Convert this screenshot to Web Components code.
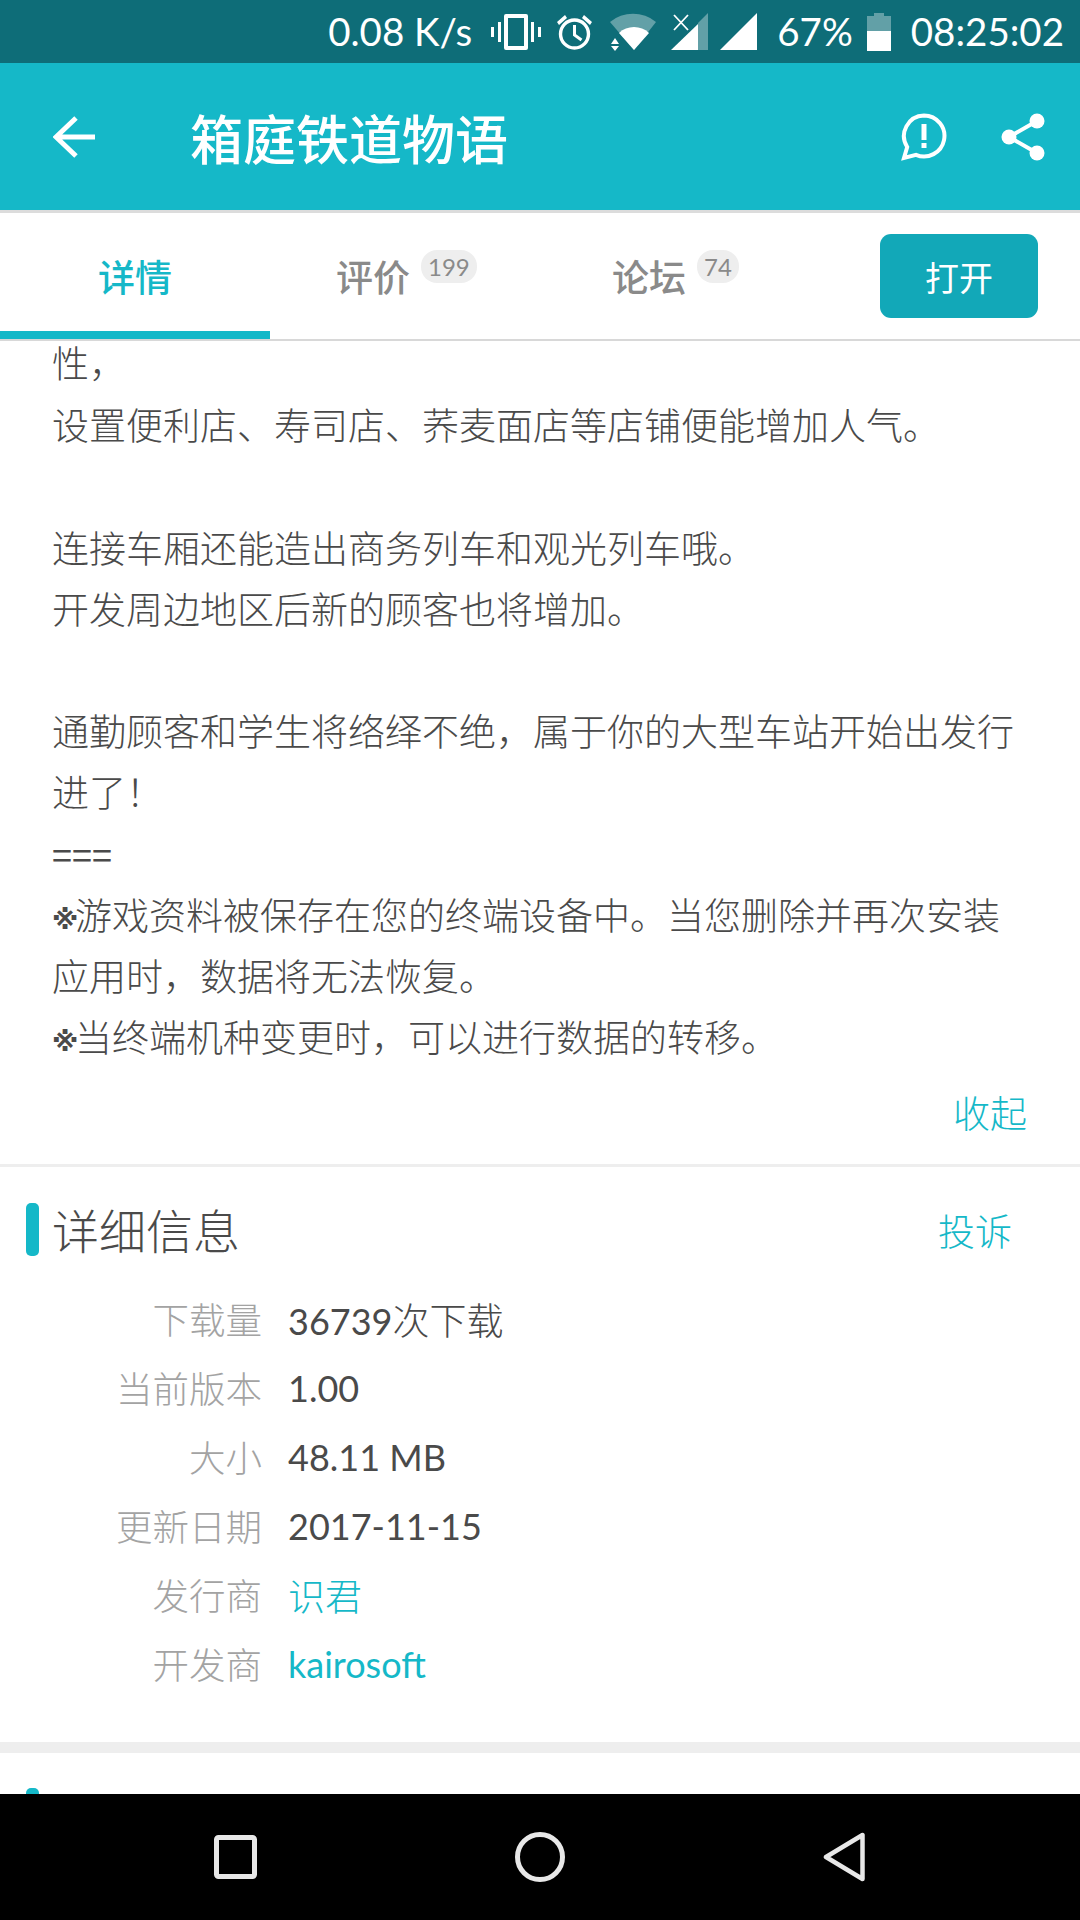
<!DOCTYPE html>
<html lang="zh">
<head>
<meta charset="utf-8">
<title>箱庭铁道物语</title>
<style>
    html, body{
        margin: 0;
        padding: 0;
        background: #fff;
    }
    body{
        width: 1080px;
        height: 1920px;
        overflow: hidden;
        font-family: Lato, "Noto Sans CJK SC", "Noto Sans", sans-serif;
        font-weight: 300;
    }
    app-page{
        display: flex;
    }
    .mark{
        display: inline-block;
        width: 23px;
        line-height: 0;
        vertical-align: 1px;
        font-family: "DejaVu Sans", sans-serif;
        font-size: 27px;
        font-weight: 700;
    }
    .eq{
        display: inline-block;
        line-height: 0;
        font-family: "Noto Sans CJK SC", sans-serif;
        font-weight: 400;
        font-size: 36px;
    }
    .zh{
        font-weight: 300;
        font-size: 37px;
    }
</style>
</head>
<body>
<app-page>
    <status-bar slot="status"></status-bar>
    <app-bar slot="bar">箱庭铁道物语</app-bar>
    <tab-bar slot="tabs"></tab-bar>
    <detail-text>
        <div>性，</div>
        <div>设置便利店、寿司店、荞麦面店等店铺便能增加人气。</div>
        <div>&nbsp;</div>
        <div>连接车厢还能造出商务列车和观光列车哦。</div>
        <div>开发周边地区后新的顾客也将增加。</div>
        <div>&nbsp;</div>
        <div>通勤顾客和学生将络绎不绝，属于你的大型车站开始出发行</div>
        <div>进了！</div>
        <div><span class="eq">===</span></div>
        <div><span class="mark">※</span>游戏资料被保存在您的终端设备中。当您删除并再次安装</div>
        <div>应用时，数据将无法恢复。</div>
        <div><span class="mark">※</span>当终端机种变更时，可以进行数据的转移。</div>
    </detail-text>
    <info-section>
        <info-row label="下载量">36739<span class="zh">次下载</span></info-row>
        <info-row label="当前版本">1.00</info-row>
        <info-row label="大小">48.11 MB</info-row>
        <info-row label="更新日期">2017-11-15</info-row>
        <info-row label="发行商" link><span class="zh">识君</span></info-row>
        <info-row label="开发商" link>kairosoft</info-row>
    </info-section>
    <nav-bar slot="nav"></nav-bar>
</app-page>

<script>
class AppPage extends HTMLElement{
    constructor(){
        super();
        this.attachShadow({ mode: 'open' });
        this.shadowRoot.innerHTML = `
            <style>
                :host{
                    display: flex;
                    flex-direction: column;
                    width: 1080px;
                    height: 1920px;
                    overflow: hidden;
                }
                #scroll{
                    flex: 1;
                    min-height: 0;
                    overflow: hidden;
                }
            </style>
            <slot name="status"></slot>
            <slot name="bar"></slot>
            <slot name="tabs"></slot>
            <div id="scroll"><slot></slot></div>
            <slot name="nav"></slot>
        `;
    }
}

class StatusBar extends HTMLElement{
    constructor(){
        super();
        this.attachShadow({ mode: 'open' });
        this.shadowRoot.innerHTML = `
            <style>
                :host{
                    display: flex;
                    align-items: center;
                    justify-content: flex-end;
                    height: 63px;
                    padding-right: 16px;
                    box-sizing: border-box;
                    background: #0e6d78;
                    color: #fff;
                    font: 400 38.5px Lato, "Noto Sans", sans-serif;
                }
                svg{ display: block; fill: #fff; }
                span{ white-space: nowrap; line-height: 63px; }
            </style>
            <span style="margin-right:19px">0.08 K/s</span>
            <svg width="50" height="36" viewBox="0 0 50 36" style="margin-right:15px">
                <path d="M0 13h3v10H0zM7 8h3v20H7zM40 8h3v20h-3zM47 13h3v10h-3z"/>
                <path fill-rule="evenodd" d="M15 0h20a2 2 0 0 1 2 2v32a2 2 0 0 1-2 2H15a2 2 0 0 1-2-2V2a2 2 0 0 1 2-2zm2 4v28h16V4z"/>
            </svg>
            <svg width="37" height="38" viewBox="0 0 37 38" style="margin-right:16px">
                <circle cx="18.5" cy="21" r="14" fill="none" stroke="#fff" stroke-width="3.4"/>
                <path d="M18.5 12v10l7 5" fill="none" stroke="#fff" stroke-width="3"/>
                <path d="M1 9l8-7 2 3-8 7zM36 9l-8-7-2 3 8 7z"/>
            </svg>
            <svg width="48" height="38" viewBox="0 0 48 38" style="margin-right:14px">
                <path d="M1 9a36 36 0 0 1 46 0L25 37z" fill="#fff" fill-opacity=".35"/>
                <path d="M10 20a22 22 0 0 1 30 0L25 37z"/>
                <path d="M6 25l-4 6h8zM2 33l4 5 4-5z"/>
            </svg>
            <svg width="37" height="37" viewBox="0 0 37 37" style="margin-right:12px">
                <path d="M37 0v37H27V10z" fill="#fff" fill-opacity=".35"/>
                <path d="M27 11v26H0z"/>
                <path d="M3 2l14 15M17 2L3 17" stroke="#fff" stroke-width="1.8" fill="none"/>
            </svg>
            <svg width="37" height="37" viewBox="0 0 37 37" style="margin-right:20px">
                <path d="M37 0v37H0z"/>
            </svg>
            <span style="margin-right:14px">67%</span>
            <svg width="24" height="38" viewBox="0 0 24 38" style="margin-right:20px">
                <path d="M7 0h10v3h7v15H0V3h7z" fill="#fff" fill-opacity=".35"/>
                <path d="M0 18h24v20H0z"/>
            </svg>
            <span>08:25:02</span>
        `;
    }
}

class AppBar extends HTMLElement{
    constructor(){
        super();
        this.attachShadow({ mode: 'open' });
        this.shadowRoot.innerHTML = `
            <style>
                :host{
                    display: flex;
                    align-items: center;
                    height: 150px;
                    box-sizing: border-box;
                    background: #15b8c8;
                    border-bottom: 3px solid #dcdcdc;
                    color: #fff;
                }
                svg{ display: block; flex: none; }
                #back{ margin-left: 53px; }
                #title{
                    margin-left: 95px;
                    flex: 1;
                    font-family: "Noto Sans CJK SC", sans-serif;
                    font-size: 53px;
                    font-weight: 500;
                    line-height: 60px;
                }
                #alert{ margin-right: 54px; }
                #share{ margin-right: 35px; }
            </style>
            <svg id="back" width="42" height="42" viewBox="0 0 42 42" fill="none" stroke="#fff" stroke-width="5">
                <path d="M42 21H4M23 2L3 21l20 19"/>
            </svg>
            <div id="title"><slot></slot></div>
            <svg id="alert" width="46" height="48" viewBox="0 0 46 48">
                <path d="M23 2.5a20.5 20.5 0 1 1-8 39.4L3 45l3.2-11A20.5 20.5 0 0 1 23 2.5z" fill="none" stroke="#fff" stroke-width="4"/>
                <path d="M20.5 11h5v16h-5zM20.5 30h5v5h-5z" fill="#fff"/>
            </svg>
            <svg id="share" width="44" height="48" viewBox="0 0 44 48">
                <path d="M36 8L8 24l28 16" fill="none" stroke="#fff" stroke-width="4"/>
                <circle cx="36" cy="8" r="7.5" fill="#fff"/>
                <circle cx="8" cy="24" r="7.5" fill="#fff"/>
                <circle cx="36" cy="40" r="7.5" fill="#fff"/>
            </svg>
        `;
    }
}

class TabBar extends HTMLElement{
    constructor(){
        super();
        this.attachShadow({ mode: 'open' });
        this.shadowRoot.innerHTML = `
            <style>
                :host{
                    display: flex;
                    align-items: stretch;
                    height: 128px;
                    box-sizing: border-box;
                    background: #fff;
                    border-bottom: 2px solid #d8d8d8;
                    font-family: "Noto Sans CJK SC", sans-serif;
                    font-size: 37px;
                    font-weight: 500;
                    color: #8a8a8a;
                }
                .tab{
                    position: relative;
                    width: 270px;
                    display: flex;
                    justify-content: center;
                    align-items: center;
                    box-sizing: border-box;
                }
                .tab.on{
                    color: #15b8c8;
                }
                .tab.on::after{
                    content: "";
                    position: absolute;
                    left: 0;
                    right: 0;
                    bottom: 0;
                    height: 8px;
                    background: #15b8c8;
                }
                .tab.count{
                    justify-content: flex-start;
                    padding-left: 66px;
                }
                #forum.tab{ padding-left: 72px; }
                .badge{
                    position: absolute;
                    top: 37px;
                    height: 33px;
                    padding: 0 7px;
                    box-sizing: border-box;
                    border-radius: 16px;
                    background: #eeeeee;
                    color: #8a8a8a;
                    font: 400 24px/33px Lato, "Noto Sans", sans-serif;
                    min-width: 41px;
                    text-align: center;
                }
                #open{
                    margin: 21px 42px 0 auto;
                    width: 158px;
                    height: 84px;
                    border-radius: 11px;
                    background: #12a8b8;
                    color: #fff;
                    font-size: 34px;
                    font-weight: 400;
                    display: flex;
                    align-items: center;
                    justify-content: center;
                }
            </style>
            <div class="tab on">详情</div>
            <div class="tab count">评价<span class="badge" style="left:151px">199</span></div>
            <div class="tab count" id="forum">论坛<span class="badge" style="left:157px">74</span></div>
            <div id="open">打开</div>
        `;
    }
}

class DetailText extends HTMLElement{
    constructor(){
        super();
        this.attachShadow({ mode: 'open' });
        this.shadowRoot.innerHTML = `
            <style>
                :host{
                    display: block;
                    background: #fff;
                    border-bottom: 3px solid #eeeeee;
                    height: 826px;
                    box-sizing: border-box;
                    overflow: hidden;
                    color: #4a4a4a;
                }
                #body{
                    padding: 0 40px 0 52px;
                    font-size: 37px;
                    line-height: 61.2px;
                    white-space: nowrap;
                }
                ::slotted(div:first-child){
                    line-height: 45px;
                    margin-bottom: 9.2px;
                }
                #fold{
                    margin-top: 15px;
                    padding-right: 53px;
                    text-align: right;
                    color: #15b8c8;
                    font-size: 37px;
                    line-height: 61px;
                }
            </style>
            <div id="body"><slot></slot></div>
            <div id="fold">收起</div>
        `;
    }
}

class InfoSection extends HTMLElement{
    constructor(){
        super();
        this.attachShadow({ mode: 'open' });
        this.shadowRoot.innerHTML = `
            <style>
                :host{
                    display: block;
                    background: #fff;
                    box-sizing: border-box;
                    height: 627px;
                }
                #head{
                    display: flex;
                    align-items: center;
                    height: 53px;
                    margin-top: 36px;
                    margin-left: 26px;
                }
                #bar{
                    width: 13px;
                    height: 53px;
                    border-radius: 5px;
                    background: #15b8c8;
                    margin-right: 13px;
                }
                #title{
                    flex: 1;
                    padding-top: 4px;
                    font-size: 47px;
                    color: #4a4a4a;
                    line-height: 53px;
                }
                #report{
                    margin-right: 68px;
                    font-size: 37px;
                    color: #15b8c8;
                }
                #rows{
                    margin-top: 28px;
                    display: flex;
                    flex-direction: column;
                }
                #gap{
                    height: 11px;
                    background: #eeeeee;
                    margin-top: 44px;
                }
                #next{
                    width: 13px;
                    height: 53px;
                    border-radius: 5px;
                    background: #15b8c8;
                    margin: 35px 0 0 26px;
                }
            </style>
            <div id="head">
                <div id="bar"></div>
                <div id="title">详细信息</div>
                <div id="report">投诉</div>
            </div>
            <div id="rows"><slot></slot></div>
            <div id="gap"></div>
            <div id="next"></div>
        `;
    }
}

class InfoRow extends HTMLElement{
    constructor(){
        super();
        this.attachShadow({ mode: 'open' });
    }

    connectedCallback(){
        this.render();
    }

    render(){
        this.shadowRoot.innerHTML = `
            <style>
                :host{
                    display: flex;
                    height: 69px;
                    align-items: center;
                    font-size: 36.5px;
                    white-space: nowrap;
                }
                #label{
                    width: 262px;
                    text-align: right;
                    color: #a3a3a3;
                    margin-right: 26px;
                }
                #value{
                    font-size: 36px;
                    font-weight: 400;
                    color: ${this.hasAttribute("link") ? "#15b8c8" : "#4a4a4a"};
                }
            </style>
            <div id="label">${this.getAttribute("label")}</div>
            <div id="value"><slot></slot></div>
        `;
    }
}

class NavBar extends HTMLElement{
    constructor(){
        super();
        this.attachShadow({ mode: 'open' });
        this.shadowRoot.innerHTML = `
            <style>
                :host{
                    display: flex;
                    align-items: center;
                    height: 126px;
                    background: #000;
                    flex: none;
                }
                svg{ display: block; flex: none; }
            </style>
            <svg width="43" height="44" viewBox="0 0 43 44" style="margin-left:214px">
                <rect x="2.5" y="2.5" width="38" height="39" rx="2" fill="none" stroke="#e8e8e8" stroke-width="5"/>
            </svg>
            <svg width="50" height="50" viewBox="0 0 50 50" style="margin-left:258px">
                <circle cx="25" cy="25" r="22.5" fill="none" stroke="#e8e8e8" stroke-width="5"/>
            </svg>
            <svg width="42" height="50" viewBox="0 0 42 50" style="margin-left:258px">
                <path d="M39.5 3v44L3 25z" fill="none" stroke="#e8e8e8" stroke-width="4.5" stroke-linejoin="round"/>
            </svg>
        `;
    }
}

customElements.define('app-page', AppPage);
customElements.define('status-bar', StatusBar);
customElements.define('app-bar', AppBar);
customElements.define('tab-bar', TabBar);
customElements.define('detail-text', DetailText);
customElements.define('info-section', InfoSection);
customElements.define('info-row', InfoRow);
customElements.define('nav-bar', NavBar);
</script>
</body>
</html>
